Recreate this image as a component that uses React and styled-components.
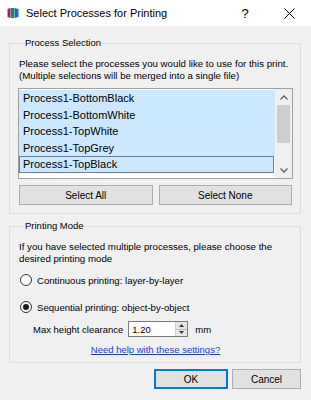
import styled, { createGlobalStyle } from "styled-components";

const GlobalStyle = createGlobalStyle`
  html, body {
    margin: 0;
    padding: 0;
    background: #f0f0f0;
  }
  * {
    box-sizing: border-box;
  }
`;

const Window = styled.div`
  width: 311px;
  height: 400px;
  display: flex;
  flex-direction: column;
  background: #f0f0f0;
  font-family: "Liberation Sans", Arial, sans-serif;
  color: #000;
  overflow: hidden;
`;

const TitleBar = styled.div`
  height: 26px;
  background: #ffffff;
  display: flex;
  align-items: center;
  padding-left: 7px;
`;

const Title = styled.div`
  flex: 1;
  margin-left: 7px;
  font-size: 11px;
`;

const TitleButton = styled.div`
  width: 44px;
  display: flex;
  justify-content: center;
  align-items: center;
  font-size: 13px;
  color: #000;
`;

const Body = styled.div`
  padding: 11px 10px 0 9px;
  display: flex;
  flex-direction: column;
`;

const Group = styled.fieldset`
  margin: ${({ first }) => (first ? "0" : "6px")} 0 0 0;
  padding: ${({ pt }) => pt}px 7px ${({ pb }) => pb}px 8px;
  border: 1px solid #dcdcdc;
  min-width: 0;
  display: flex;
  flex-direction: column;
`;

const Legend = styled.legend`
  padding: 0 2px;
  margin-left: 5px;
  font-size: 9.5px;
  line-height: 12px;
`;

const Text = styled.div`
  font-size: 9.7px;
  line-height: 12px;
  padding-left: 1px;
  white-space: nowrap;
`;

const ListBox = styled.div`
  margin-top: 6px;
  height: 91px;
  border: 1px solid #a0a0a0;
  background: #ffffff;
  display: flex;
`;

const Items = styled.div`
  flex: 1;
  padding-top: 1px;
`;

const Item = styled.div`
  height: 16.5px;
  font-size: 11px;
  padding-left: 3px;
  background: #cce8ff;
  border: 1px solid ${({ focused }) => (focused ? "#6b7f94" : "transparent")};
  display: flex;
  align-items: center;
  margin-right: ${({ focused }) => (focused ? "1px" : "0")};
`;

const ScrollBar = styled.div`
  width: 17px;
  background: #f0f0f0;
  display: flex;
  flex-direction: column;
`;

const Arrow = styled.div`
  height: 16px;
  display: flex;
  align-items: center;
  justify-content: center;
`;

const Track = styled.div`
  flex: 1;
  display: flex;
  flex-direction: column;
  padding: 0 2px;
`;

const Thumb = styled.div`
  height: 38px;
  background: #cdcdcd;
`;

const ButtonRow = styled.div`
  margin-top: 6px;
  display: grid;
  grid-template-columns: 1fr 1fr;
  gap: 6px;
  padding: 0 1px;
`;

const Button = styled.button`
  height: 20px;
  width: ${({ w }) => (w ? `${w}px` : "auto")};
  padding: 0;
  background: #e1e1e1;
  border: 1px solid ${({ primary }) => (primary ? "#0078d7" : "#adadad")};
  box-shadow: ${({ primary }) => (primary ? "inset 0 0 0 1px #0078d7" : "none")};
  font-family: "Liberation Sans", Arial, sans-serif;
  font-size: 10px;
  color: #000;
`;

const RadioRow = styled.label`
  display: flex;
  align-items: center;
  gap: 5px;
  height: 14px;
  padding-left: 2px;
  margin-top: ${({ mt }) => mt}px;
  font-size: 9.6px;
`;

const RadioCircle = styled.span`
  width: 12px;
  height: 12px;
  border-radius: 50%;
  border: 1px solid #333333;
  background: #ffffff;
  display: flex;
  align-items: center;
  justify-content: center;

  &::after {
    content: "";
    display: ${({ checked }) => (checked ? "block" : "none")};
    width: 6px;
    height: 6px;
    border-radius: 50%;
    background: #1a1a1a;
  }
`;

const FieldRow = styled.div`
  margin-top: 7px;
  padding-left: 15px;
  display: flex;
  align-items: center;
  font-size: 9.5px;
  height: 16px;
`;

const SpinBox = styled.div`
  margin-left: 5px;
  width: 60px;
  height: 16px;
  border: 1px solid #7a7a7a;
  background: #ffffff;
  display: flex;
`;

const SpinValue = styled.div`
  flex: 1;
  padding-left: 3px;
  display: flex;
  align-items: center;
  font-size: 9.5px;
`;

const SpinButtons = styled.div`
  width: 12px;
  display: flex;
  flex-direction: column;
  border-left: 1px solid #d0d0d0;
`;

const SpinHalf = styled.div`
  flex: 1;
  background: #e6e6e6;
  display: flex;
  align-items: center;
  justify-content: center;
  border-bottom: ${({ top }) => (top ? "1px solid #bdbdbd" : "none")};
`;

const Unit = styled.span`
  margin-left: 7px;
`;

const LinkRow = styled.div`
  margin-top: 7px;
  display: flex;
  justify-content: center;
  height: 12px;
  line-height: 12px;
`;

const Link = styled.a`
  font-size: 9.5px;
  color: #1a3fcf;
  text-decoration: underline;
`;

const Footer = styled.div`
  margin-top: 6px;
  display: flex;
  justify-content: flex-end;
  gap: 4px;
`;

function AppIcon() {
  return (
    <svg width="12" height="12" viewBox="0 0 12 12">
      <path d="M0.5 2 L3.5 1 L3.5 11 L0.5 10 Z" fill="#9c2466" />
      <path d="M3.8 1 L7.2 1 L7.2 11 L3.8 11 Z" fill="#1f8a4c" />
      <path d="M7.5 1 L11.5 2 L11.5 10 L7.5 11 Z" fill="#1f64c8" />
    </svg>
  );
}

function CloseIcon() {
  return (
    <svg width="11" height="11" viewBox="0 0 11 11">
      <path d="M0.5 0.5 L10.5 10.5 M10.5 0.5 L0.5 10.5" stroke="#000" strokeWidth="1" />
    </svg>
  );
}

function Chevron({ up }) {
  return (
    <svg width="8" height="5" viewBox="0 0 8 5">
      <path
        d={up ? "M0.5 4.5 L4 1 L7.5 4.5" : "M0.5 0.5 L4 4 L7.5 0.5"}
        stroke="#606060"
        strokeWidth="1.3"
        fill="none"
      />
    </svg>
  );
}

function SpinArrow({ up }) {
  return (
    <svg width="5" height="3" viewBox="0 0 5 3">
      <path d={up ? "M0 3 L2.5 0 L5 3 Z" : "M0 0 L2.5 3 L5 0 Z"} fill="#333" />
    </svg>
  );
}

const processes = [
  "Process1-BottomBlack",
  "Process1-BottomWhite",
  "Process1-TopWhite",
  "Process1-TopGrey",
  "Process1-TopBlack",
];

export default function App() {
  return (
    <>
      <GlobalStyle />
      <Window>
        <TitleBar>
          <AppIcon />
          <Title>Select Processes for Printing</Title>
          <TitleButton>?</TitleButton>
          <TitleButton>
            <CloseIcon />
          </TitleButton>
        </TitleBar>
        <Body>
          <Group first pt={9} pb={8}>
            <Legend>Process Selection</Legend>
            <Text>
              Please select the processes you would like to use for this print.
              <br />
              (Multiple selections will be merged into a single file)
            </Text>
            <ListBox>
              <Items>
                {processes.map((p, i) => (
                  <Item key={p} focused={i === processes.length - 1}>
                    {p}
                  </Item>
                ))}
              </Items>
              <ScrollBar>
                <Arrow>
                  <Chevron up />
                </Arrow>
                <Track>
                  <Thumb />
                </Track>
                <Arrow>
                  <Chevron />
                </Arrow>
              </ScrollBar>
            </ListBox>
            <ButtonRow>
              <Button>Select All</Button>
              <Button>Select None</Button>
            </ButtonRow>
          </Group>
          <Group pt={9} pb={6}>
            <Legend>Printing Mode</Legend>
            <Text>
              If you have selected multiple processes, please choose the
              <br />
              desired printing mode
            </Text>
            <RadioRow mt={8}>
              <RadioCircle />
              Continuous printing: layer-by-layer
            </RadioRow>
            <RadioRow mt={13}>
              <RadioCircle checked />
              Sequential printing: object-by-object
            </RadioRow>
            <FieldRow>
              Max height clearance
              <SpinBox>
                <SpinValue>1.20</SpinValue>
                <SpinButtons>
                  <SpinHalf top>
                    <SpinArrow up />
                  </SpinHalf>
                  <SpinHalf>
                    <SpinArrow />
                  </SpinHalf>
                </SpinButtons>
              </SpinBox>
              <Unit>mm</Unit>
            </FieldRow>
            <LinkRow>
              <Link href="#">Need help with these settings?</Link>
            </LinkRow>
          </Group>
          <Footer>
            <Button primary w={74}>OK</Button>
            <Button w={69}>Cancel</Button>
          </Footer>
        </Body>
      </Window>
    </>
  );
}
